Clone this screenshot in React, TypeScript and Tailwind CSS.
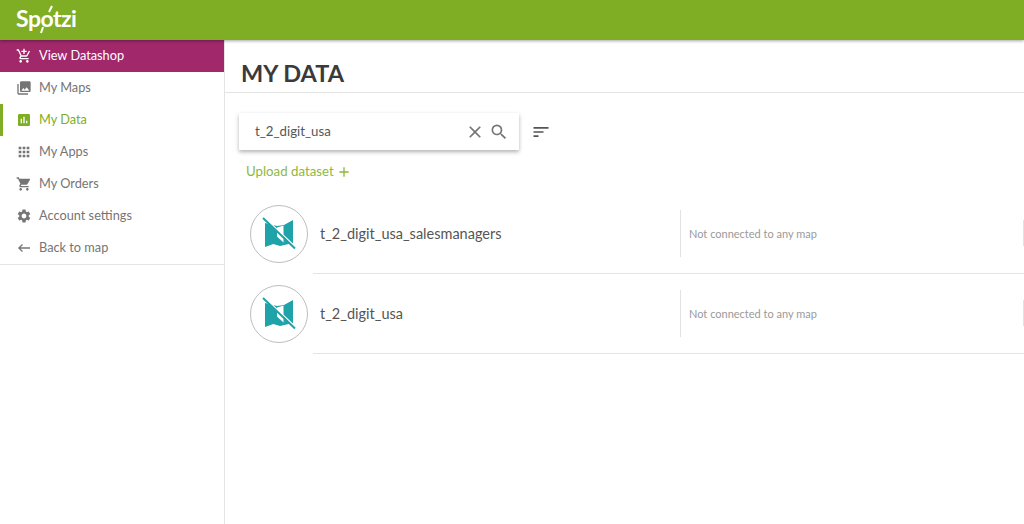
import React from 'react';
import {
    MdAddShoppingCart,
    MdPhotoLibrary,
    MdAssessment,
    MdApps,
    MdShoppingCart,
    MdSettings,
    MdKeyboardBackspace,
    MdClose,
    MdSearch,
    MdSort,
    MdAdd,
} from 'react-icons/md';

const menuItems = [
    { label: 'My Maps', icon: MdPhotoLibrary },
    { label: 'My Data', icon: MdAssessment, active: true },
    { label: 'My Apps', icon: MdApps },
    { label: 'My Orders', icon: MdShoppingCart },
    { label: 'Account settings', icon: MdSettings },
    { label: 'Back to map', icon: MdKeyboardBackspace },
];

const datasets = ['t_2_digit_usa_salesmanagers', 't_2_digit_usa'];

const MapOffIcon = () => (
    <svg width="34" height="34" viewBox="0 0 34 34">
        <path
            d="M3 6 L15 9 L22 8 L31 3 V26 L18 29 L11.3 27 L3 30 Z"
            fill="#1fa3a8"
        />
        <path d="M15 10.5 L21.5 8.5 V25.5 L15 19.5 Z" fill="#ffffff" />
        <path d="M2 0 L33 29.5" stroke="#ffffff" strokeWidth="1.5" />
        <path d="M1 1 L33 31.5" stroke="#1fa3a8" strokeWidth="2" />
    </svg>
);

const Logo = () => (
    <div className="relative text-white text-[23px] leading-none font-bold tracking-[-0.5px]">
        Spotzi
        <svg className="absolute left-0 top-0 overflow-visible" width="61" height="23" viewBox="0 0 61 23">
            <path d="M36 -1 L33 5 M27 20 L25 26" stroke="#ffffff" strokeWidth="2" />
        </svg>
    </div>
);

const DatasetRow: React.FC<{ name: string }> = ({ name }) => (
    <div className="relative h-20 ml-[88px] border-b border-[#e4e4e4] flex items-center">
        <div className="absolute -left-[63px] top-[11px] w-[58px] h-[58px] rounded-full border border-[#bdbdbd] bg-white flex items-center justify-center">
            <MapOffIcon />
        </div>
        <div className="w-[367px] pl-[7px] text-[14.5px] text-[#555555]">{name}</div>
        <div className="h-[47px] mt-[1px] border-l border-[#e2e2e2] pl-2 flex items-center text-[11px] text-[#9a9a9a] flex-1">
            Not connected to any map
        </div>
        <div className="h-[26px] w-px bg-[#e2e2e2]" />
    </div>
);

export default function App() {
    return (
        <div className="w-[1024px] h-[524px] overflow-hidden bg-white flex flex-col font-['Lato',sans-serif]">
            <header className="relative z-10 h-10 shrink-0 bg-[#7fae24] shadow-[0_1px_3px_rgba(0,0,0,0.35)] flex items-center pl-4 pb-[3px]">
                <Logo />
            </header>
            <div className="flex flex-1 min-h-0">
                <aside className="w-[225px] shrink-0 border-r border-[#e4e4e4]">
                    <div className="h-8 bg-[#a0286b] text-white flex items-center pl-4 text-[12.75px]">
                        <MdAddShoppingCart size={16} className="mr-[7px]" />
                        <span className="-mt-[1px]">View Datashop</span>
                    </div>
                    <nav className="border-b border-[#e4e4e4]">
                        {menuItems.map(item => {
                            const Icon = item.icon;
                            return (
                                <div
                                    key={item.label}
                                    className={`h-8 flex items-center pl-4 text-[12.75px] ${
                                        item.active
                                            ? 'border-l-[3px] border-[#7fae24] pl-[13px] text-[#7fae24]'
                                            : 'text-[#757575]'
                                    }`}
                                >
                                    <Icon size={16} className="mr-[7px]" />
                                    <span className="-mt-[1px]">{item.label}</span>
                                </div>
                            );
                        })}
                    </nav>
                </aside>
                <main className="flex-1 min-w-0">
                    <div className="h-[53px] border-b border-[#e4e4e4] pl-4 flex items-center">
                        <h1 className="text-[23.5px] font-bold text-[#3a3a3a] mt-[15px]">MY DATA</h1>
                    </div>
                    <div className="flex items-center pl-[14px] mt-5">
                        <div className="w-[280px] h-[37px] bg-white shadow-[0_2px_4px_rgba(0,0,0,0.3)] flex items-center pl-4 pr-[10px] text-[13.25px] text-[#555555]">
                            <span className="flex-1">t_2_digit_usa</span>
                            <MdClose size={20} className="text-[#757575] mr-[4px]" />
                            <MdSearch size={20} className="text-[#757575]" />
                        </div>
                        <MdSort size={20} className="ml-[12px] text-[#555555]" />
                    </div>
                    <div className="flex items-center pl-[21px] mt-[12px] text-[13.25px] text-[#8fb83c]">
                        Upload dataset
                        <MdAdd size={16} className="ml-[2px]" />
                    </div>
                    <div className="mt-[12px]">
                        {datasets.map(name => (
                            <DatasetRow key={name} name={name} />
                        ))}
                    </div>
                </main>
            </div>
        </div>
    );
}
